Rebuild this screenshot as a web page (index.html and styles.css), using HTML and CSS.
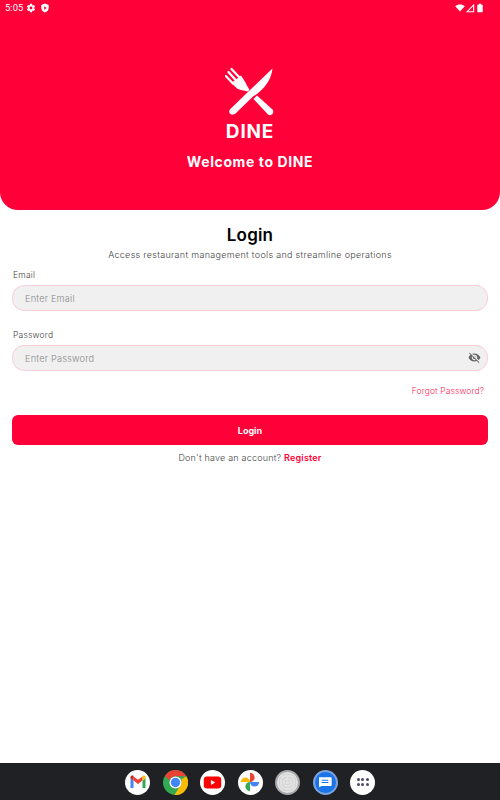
FILE: index.html
```html
<!DOCTYPE html>
<html lang="en">
<head>
    <meta charset="UTF-8">
    <meta name="viewport" content="width=device-width, initial-scale=1.0">
    <title>DINE</title>
    <link rel="stylesheet" href="styles.css">
</head>
<body>
    <div class="page">
        <header class="hero">
            <div class="status-bar">
                <div class="status-left">
                    <span class="time">5:05</span>
                    <svg class="status-icon" viewBox="0 0 24 24"><path d="M19.4 13c.04-.33.1-.66.1-1s-.06-.67-.1-1l2.1-1.65c.2-.15.25-.42.12-.64l-2-3.46c-.12-.22-.4-.3-.6-.22l-2.5 1c-.52-.4-1.08-.73-1.7-.98l-.37-2.65A.5.5 0 0 0 14 2h-4a.5.5 0 0 0-.5.42l-.37 2.65c-.62.25-1.18.58-1.7.98l-2.5-1a.5.5 0 0 0-.6.22l-2 3.46c-.13.22-.07.49.12.64L4.55 11c-.04.33-.05.66-.05 1s.01.67.05 1l-2.1 1.65c-.2.15-.25.42-.12.64l2 3.46c.12.22.4.3.6.22l2.5-1c.52.4 1.08.73 1.7.98l.37 2.65c.04.24.25.42.5.42h4c.25 0 .46-.18.5-.42l.37-2.65c.62-.25 1.18-.58 1.7-.98l2.5 1c.2.08.48 0 .6-.22l2-3.46c.13-.22.08-.49-.12-.64zM12 15.5a3.5 3.5 0 1 1 0-7 3.5 3.5 0 0 1 0 7z"/></svg>
                    <svg class="status-icon" viewBox="0 0 24 24"><path d="M12 1 3 5v6c0 5.5 3.8 10.7 9 12 5.200-1.300 9-6.500 9-12V5zM10 8l6 4-6 4z" fill-rule="evenodd"/></svg>
                </div>
                <div class="status-right">
                    <svg class="status-icon" viewBox="0 0 24 24"><path d="M12 20.500 0.500 8C3.500 5 7.500 3.500 12 3.500S20.500 5 23.500 8z"/></svg>
                    <svg class="status-icon" viewBox="0 0 24 24"><path d="M22 2v20H2zM19.500 8 8 19.500h11.500z" fill-rule="evenodd"/></svg>
                    <svg class="status-icon" viewBox="0 0 24 24"><path d="M9 2h6v2h2.500c.6 0 1 .4 1 1v16c0 .6-.4 1-1 1h-11c-.6 0-1-.4-1-1V5c0-.6.4-1 1-1H9z"/></svg>
                </div>
            </div>
            <div class="brand">
                <svg class="brand-logo" viewBox="0 0 50 50">
                    <!-- knife -->
                    <path class="logo-fill" d="M47.500 1.500 4.800 42.500Q3.300 45.500 5.500 47 8 48.500 10.500 46.500L28 29.500C38.500 23.500 46.500 13 47.500 1.500z"/>
                    <!-- fork -->
                    <path class="logo-fill" d="M32 28.500 47.500 42.500Q49 45 47.500 47 45.500 49 43 47.500L28.500 32z"/>
                    <path class="logo-tine" d="M6.500 2 15 11M3.500 5 11.500 14M.8 9 8.500 17"/>
                    <path class="logo-fill" d="M16 8.500 20.500 15.500C21.500 18.500 23.500 20.500 24.500 23L22.500 24.500C19 23.500 15 23 12 21.500L6.500 16z"/>
                </svg>
                <div class="brand-name">DINE</div>
                <div class="brand-welcome">Welcome to DINE</div>
            </div>
        </header>

        <main class="login">
            <h1>Login</h1>
            <p class="subtitle">Access restaurant management tools and streamline operations</p>

            <label class="field-label" for="email">Email</label>
            <input class="field-input" type="text" id="email" placeholder="Enter Email">

            <label class="field-label password-label" for="password">Password</label>
            <div class="password-wrap">
                <input class="field-input" type="text" id="password" placeholder="Enter Password">
                <svg class="eye-icon" viewBox="0 0 24 24"><path d="M12 7c2.760 0 5 2.240 5 5 0 .650-.130 1.260-.360 1.830l2.920 2.920c1.510-1.260 2.700-2.890 3.430-4.750-1.730-4.390-6-7.500-11-7.500-1.400 0-2.740.250-3.980.700l2.160 2.160C10.740 7.130 11.350 7 12 7zM2 4.270l2.280 2.280.460.460C3.080 8.300 1.780 10.020 1 12c1.730 4.390 6 7.500 11 7.500 1.550 0 3.030-.300 4.380-.840l.420.420L19.730 22 21 20.730 3.270 3 2 4.270zM7.530 9.800l1.550 1.550c-.050.210-.080.430-.080.650 0 1.660 1.340 3 3 3 .220 0 .440-.030.650-.080l1.550 1.550c-.670.330-1.410.530-2.200.530-2.760 0-5-2.240-5-5 0-.790.200-1.530.530-2.200zm4.310-.780l3.150 3.150.020-.160c0-1.660-1.340-3-3-3l-.170.010z"/></svg>
            </div>

            <a href="#" class="forgot">Forgot Password?</a>
            <button class="login-btn">Login</button>
            <p class="register">Don't have an account? <a href="#">Register</a></p>
        </main>

        <footer class="dock">
            <div class="dock-app app-white">
                <svg viewBox="0 0 24 24" width="18" height="18">
                    <path fill="#4285f4" d="M2 20h4V10L2 7z"/>
                    <path fill="#34a853" d="M18 20h4V7l-4 3z"/>
                    <path fill="#ea4335" d="M6 10V4.500L12 9l6-4.500V10l-6 4.500z"/>
                    <path fill="#c5221f" d="M2 7V5.500C2 3.500 4.300 2.500 6 3.800v6.200z"/>
                    <path fill="#fbbc04" d="M22 7V5.500c0-2-2.300-3-4-1.700V10z"/>
                </svg>
            </div>
            <div class="dock-app app-chrome">
                <svg viewBox="0 0 24 24" width="25" height="25">
                    <circle cx="12" cy="12" r="12" fill="#34a853"/>
                    <path fill="#ea4335" d="M12 0a12 12 0 0 1 10.400 6H12a6 6 0 0 0-5.600 3.800L1.800 5.800A12 12 0 0 1 12 0z"/>
                    <path fill="#fbbc04" d="M22.400 6A12 12 0 0 1 11 24l5.200-8.500A6 6 0 0 0 17.500 9z"/>
                    <circle cx="12" cy="12" r="5.800" fill="#fff"/>
                    <circle cx="12" cy="12" r="4.500" fill="#4285f4"/>
                </svg>
            </div>
            <div class="dock-app app-white">
                <svg viewBox="0 0 24 24" width="19" height="19">
                    <rect x="1" y="4.500" width="22" height="15" rx="4" fill="#f00"/>
                    <path fill="#fff" d="M10 8.800v6.400l5.500-3.200z"/>
                </svg>
            </div>
            <div class="dock-app app-white">
                <svg viewBox="0 0 24 24" width="20" height="20">
                    <path fill="#fbbc04" d="M12 12H1a5.500 5.500 0 0 1 11 0z"/>
                    <path fill="#ea4335" d="M12 12V1a5.500 5.500 0 0 1 0 11z"/>
                    <path fill="#4285f4" d="M12 12h11a5.500 5.500 0 0 1-11 0z"/>
                    <path fill="#34a853" d="M12 12v11a5.500 5.500 0 0 1 0-11z"/>
                </svg>
            </div>
            <div class="dock-app app-gray"></div>
            <div class="dock-app app-messages">
                <svg viewBox="0 0 24 24" width="16" height="16">
                    <path fill="#fff" d="M3 5h18c.6 0 1 .4 1 1v11c0 .6-.4 1-1 1H7l-4 2z"/>
                    <path fill="#1a73e8" d="M7 8.500h10V10H7zM7 12h10v1.500H7z"/>
                </svg>
            </div>
            <div class="dock-app app-white">
                <div class="app-grid">
                    <span></span><span></span><span></span>
                    <span></span><span></span><span></span>
                </div>
            </div>
        </footer>
    </div>
</body>
</html>
```

FILE: styles.css
```css
body, html {
    margin: 0;
    padding: 0;
    background-color: #fff;
    font-family: Inter, "Noto Sans", sans-serif;
}
.page {
    height: 800px;
    display: flex;
    flex-direction: column;
    overflow: hidden;
}
.hero {
    height: 210px;
    flex-shrink: 0;
    background-color: #ff0038;
    border-radius: 0 0 18px 18px;
    color: white;
}
.status-bar {
    height: 15px;
    padding: 0 15px 0 5px;
    display: flex;
    justify-content: space-between;
    align-items: center;
}
.status-left {
    display: flex;
    align-items: center;
    gap: 4px;
}
.status-right {
    display: flex;
    align-items: center;
}
.time {
    font-family: Roboto, sans-serif;
    font-size: 9.500px;
    margin-right: -1px;
}
.status-icon {
    width: 10px;
    height: 10px;
    fill: white;
}
.brand {
    display: flex;
    flex-direction: column;
    align-items: center;
    padding-top: 52px;
}
.brand-logo {
    width: 50px;
    height: 50px;
}
.logo-fill {
    fill: white;
}
.logo-tine {
    stroke: white;
    stroke-width: 2.300;
    stroke-linecap: round;
    fill: none;
}
.brand-name {
    font-size: 19px;
    font-weight: 700;
    line-height: 24px;
    margin-top: 3px;
    letter-spacing: 0.800px;
}
.brand-welcome {
    font-size: 14px;
    font-weight: 700;
    line-height: 18px;
    margin-top: 9px;
    letter-spacing: 0.600px;
}
.login {
    flex: 1;
    padding: 0 12px;
    display: flex;
    flex-direction: column;
}
h1 {
    margin: 14px 0 0;
    font-size: 17px;
    font-weight: 600;
    line-height: 22px;
    text-align: center;
    color: #000;
    letter-spacing: 0.200px;
}
.subtitle {
    margin: 2px 0 0;
    font-size: 9px;
    font-weight: 300;
    line-height: 14px;
    text-align: center;
    color: #444;
    letter-spacing: 0.300px;
}
.field-label {
    margin: 6px 0 0 1px;
    font-size: 8.500px;
    font-weight: 300;
    line-height: 14px;
    color: #444;
    letter-spacing: 0.200px;
}
.password-label {
    margin-top: 17.500px;
}
.field-input {
    width: 100%;
    height: 25.500px;
    margin-top: 3px;
    padding: 1px 12px 0;
    box-sizing: border-box;
    background-color: #f0f0f0;
    border: 1px solid #fbcfd8;
    border-radius: 12px;
    outline: none;
    font-family: Inter, sans-serif;
    font-size: 9.200px;
    font-weight: 300;
    letter-spacing: 0.200px;
    display: block;
}
.field-input::placeholder {
    color: #888;
    opacity: 1;
}
.password-wrap {
    position: relative;
}
.eye-icon {
    position: absolute;
    right: 7px;
    top: 9px;
    width: 13px;
    height: 13px;
    fill: #666;
}
.forgot {
    margin-top: 14.500px;
    align-self: flex-end;
    padding-right: 4px;
    font-size: 8.500px;
    font-weight: 300;
    line-height: 12px;
    color: #ff2a58;
    text-decoration: none;
    letter-spacing: 0.100px;
}
.login-btn {
    height: 30px;
    margin-top: 18px;
    background-color: #ff0038;
    border: none;
    border-radius: 6px;
    color: white;
    font-family: Inter, sans-serif;
    font-size: 9px;
    font-weight: 700;
    cursor: pointer;
}
.register {
    margin: 6px 0 0;
    font-size: 9px;
    font-weight: 300;
    line-height: 14px;
    text-align: center;
    color: #444;
    letter-spacing: 0.200px;
}
.register a {
    color: #ff0038;
    font-weight: 600;
    text-decoration: none;
}
.dock {
    height: 37px;
    flex-shrink: 0;
    background-color: #202124;
    display: flex;
    justify-content: center;
    align-items: center;
    gap: 12.500px;
}
.dock-app {
    width: 25px;
    height: 25px;
    border-radius: 50%;
    display: flex;
    justify-content: center;
    align-items: center;
    margin-top: 1px;
}
.app-white {
    background-color: white;
}
.app-gray {
    background: repeating-radial-gradient(circle, #e2e2e2 0, #e2e2e2 2px, #d6d6d6 2px, #d6d6d6 3px);
    border: 2px solid #a8a8a8;
    box-sizing: border-box;
}
.app-messages {
    background-color: #1a73e8;
    border: 2px solid #7ba3dc;
    box-sizing: border-box;
}
.app-grid {
    display: grid;
    grid-template-columns: repeat(3, 3px);
    gap: 2px 1.500px;
}
.app-grid span {
    width: 3px;
    height: 3px;
    border-radius: 50%;
    background-color: #4a4a68;
}
```
